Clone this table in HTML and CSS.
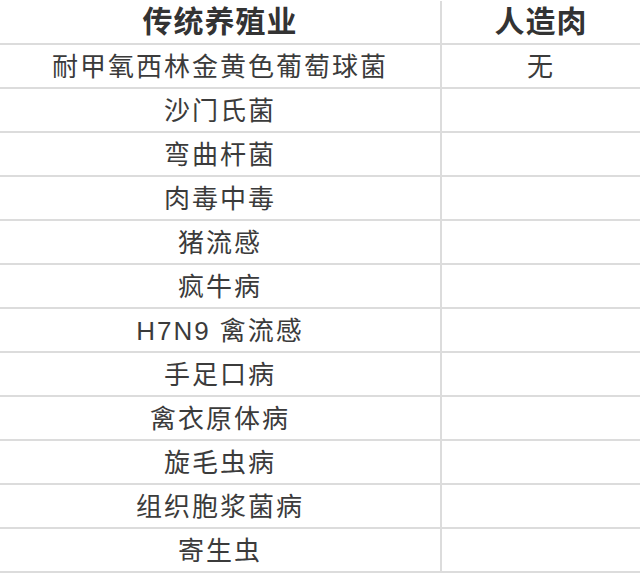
FILE: index.html
```html
<!DOCTYPE html>
<html lang="zh">
<head>
<meta charset="utf-8">
<link rel="stylesheet" href="styles.css">
</head>
<body>
<div class="table">
  <div class="cell head left">传统养殖业</div><div class="cell head">人造肉</div>
  <div class="cell left">耐甲氧西林金黄色葡萄球菌</div><div class="cell">无</div>
  <div class="cell left">沙门氏菌</div><div class="cell"></div>
  <div class="cell left">弯曲杆菌</div><div class="cell"></div>
  <div class="cell left">肉毒中毒</div><div class="cell"></div>
  <div class="cell left">猪流感</div><div class="cell"></div>
  <div class="cell left">疯牛病</div><div class="cell"></div>
  <div class="cell left">H7N9 禽流感</div><div class="cell"></div>
  <div class="cell left">手足口病</div><div class="cell"></div>
  <div class="cell left">禽衣原体病</div><div class="cell"></div>
  <div class="cell left">旋毛虫病</div><div class="cell"></div>
  <div class="cell left">组织胞浆菌病</div><div class="cell"></div>
  <div class="cell left">寄生虫</div><div class="cell"></div>
</div>
</body>
</html>
```
FILE: styles.css
```css
html, body {
  margin: 0;
  padding: 0;
  background: #fff;
}
.table {
  display: grid;
  grid-template-columns: 442px 198px;
  grid-auto-rows: 44px;
  width: 640px;
  margin-top: 1px;
  font-family: "Liberation Sans", "Noto Sans CJK SC", sans-serif;
  color: #3b3b3b;
}
.cell {
  display: flex;
  align-items: center;
  justify-content: center;
  box-sizing: border-box;
  border-bottom: 2px solid #dcdcdc;
  font-size: 26px;
  letter-spacing: 2px;
  line-height: 1;
  padding-top: 1px;
}
.left {
  border-right: 2px solid #dcdcdc;
}
.head {
  font-size: 30px;
  font-weight: bold;
  letter-spacing: 1px;
  color: #333;
  padding-top: 0;
}
```
